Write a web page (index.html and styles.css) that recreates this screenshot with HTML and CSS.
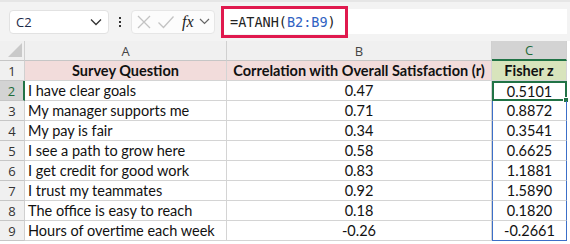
FILE: index.html
```html
<!DOCTYPE html>
<html lang="en">

<head>
  <meta charset="UTF-8">
  <meta name="viewport" content="width=device-width, initial-scale=1.0">
  <title>Fisher z</title>
  <link rel="stylesheet" href="styles.css">
</head>

<body>
  <div class="toolbar">
    <div class="name-box">
      <span>C2</span>
      <svg width="12" height="8" viewBox="0 0 12 8"><path d="M1 1.5 6 6.5 11 1.5" fill="none" stroke="#333" stroke-width="1.3"/></svg>
    </div>
    <div class="dots"><i></i><i></i><i></i></div>
    <div class="fx-box">
      <svg width="16" height="16" viewBox="0 0 16 16"><path d="M2 2 14 14M14 2 2 14" stroke="#c3c3c3" stroke-width="1.3"/></svg>
      <svg width="18" height="16" viewBox="0 0 18 16"><path d="M1.5 8.5 6.5 13.5 16.5 2.5" fill="none" stroke="#c3c3c3" stroke-width="1.3"/></svg>
      <span class="fx">fx</span>
      <svg width="11" height="7" viewBox="0 0 11 7"><path d="M1 1 5.5 5.5 10 1" fill="none" stroke="#666" stroke-width="1.2"/></svg>
    </div>
    <div class="formula">
      <span class="formula-text">=ATANH(<span class="ref">B2:B9</span>)</span>
    </div>
  </div>

  <div class="sheet">
    <div class="corner"><span class="tri"></span></div>
    <div class="col-head">A</div>
    <div class="col-head">B</div>
    <div class="col-head active">C</div>

    <div class="row-head">1</div>
    <div class="cell title">Survey Question</div>
    <div class="cell title">Correlation with Overall Satisfaction (r)</div>
    <div class="cell title green">Fisher z</div>

    <div class="row-head active">2</div>
    <div class="cell">I have clear goals</div>
    <div class="cell num">0.47</div>
    <div class="cell num selected">0.5101<span class="handle"></span></div>

    <div class="row-head">3</div>
    <div class="cell">My manager supports me</div>
    <div class="cell num">0.71</div>
    <div class="cell num spill">0.8872</div>

    <div class="row-head">4</div>
    <div class="cell">My pay is fair</div>
    <div class="cell num">0.34</div>
    <div class="cell num spill">0.3541</div>

    <div class="row-head">5</div>
    <div class="cell">I see a path to grow here</div>
    <div class="cell num">0.58</div>
    <div class="cell num spill">0.6625</div>

    <div class="row-head">6</div>
    <div class="cell">I get credit for good work</div>
    <div class="cell num">0.83</div>
    <div class="cell num spill">1.1881</div>

    <div class="row-head">7</div>
    <div class="cell">I trust my teammates</div>
    <div class="cell num">0.92</div>
    <div class="cell num spill">1.5890</div>

    <div class="row-head">8</div>
    <div class="cell">The office is easy to reach</div>
    <div class="cell num">0.18</div>
    <div class="cell num spill">0.1820</div>

    <div class="row-head">9</div>
    <div class="cell">Hours of overtime each week</div>
    <div class="cell num">-0.26</div>
    <div class="cell num spill last">-0.2661</div>
  </div>
</body>

</html>
```

FILE: styles.css
```css
* {
  margin: 0;
  padding: 0;
  box-sizing: border-box;
}

body {
  width: 570px;
  height: 244px;
  overflow: hidden;
  background: #fff;
  font-family: Lato, "Open Sans", sans-serif;
  color: #111;
}

.toolbar {
  display: flex;
  align-items: center;
  height: 41px;
  padding: 0 3px 0 9px;
  background: #f3f3f3;
  border-top: 2px solid #e6e6e6;
}

.name-box {
  display: flex;
  align-items: center;
  justify-content: space-between;
  width: 100px;
  height: 24px;
  padding: 0 6px 0 6px;
  background: #fff;
  border: 1px solid #e2e2e2;
  border-radius: 4px;
  font-family: "Open Sans", sans-serif;
  font-size: 13px;
  color: #1d2a4a;
}

.dots {
  display: flex;
  flex-direction: column;
  gap: 2px;
  width: 22px;
  align-items: center;
}

.dots i {
  width: 2px;
  height: 2px;
  background: #333;
}

.fx-box {
  display: flex;
  align-items: center;
  gap: 5px;
  width: 84px;
  height: 24px;
  padding: 0 4px 0 4px;
  background: #fcfcfc;
  border: 1px solid #e6e6e6;
  border-radius: 4px;
}

.fx {
  font-family: "Liberation Serif", serif;
  font-style: italic;
  font-size: 16px;
  color: #222;
  margin-left: 2px;
}

.formula {
  flex: 1;
  height: 25px;
  margin-left: 6px;
  background: #fff;
  display: flex;
  align-items: center;
}

.formula-text {
  display: flex;
  align-items: center;
  height: 32px;
  padding: 0 9px 0 6px;
  border: 3px solid #e0194e;
  font-family: "DejaVu Sans Mono", monospace;
  font-size: 13.5px;
  color: #222;
}

.ref {
  color: #2f62c2;
}

.sheet {
  display: grid;
  grid-template-columns: 25px 202px 265px 75px;
  grid-auto-rows: 20px;
  font-size: 14.5px;
}

.corner,
.col-head,
.row-head {
  background: #f0f0f0;
  color: #444;
  border-right: 1px solid #d0d0d0;
  border-bottom: 1px solid #c6c6c6;
  display: flex;
  align-items: center;
  justify-content: center;
}

.corner {
  justify-content: flex-end;
  align-items: flex-end;
  padding: 0 2px 3px 0;
}

.tri {
  width: 0;
  height: 0;
  border-left: 14px solid transparent;
  border-bottom: 14px solid #c9c9c9;
}

.col-head {
  font-family: "Open Sans", sans-serif;
  font-size: 13px;
}

.col-head.active {
  background: #d3d3d3;
  color: #1f6b3a;
  border-bottom: 2px solid #217346;
}

.row-head {
  font-family: "Open Sans", sans-serif;
  font-size: 13px;
  color: #333;
}

.row-head.active {
  background: #d3d3d3;
  color: #1f6b3a;
  border-right: 2px solid #217346;
}

.cell {
  position: relative;
  display: flex;
  align-items: center;
  padding: 0 3px;
  white-space: nowrap;
  border-right: 1px solid #d4d4d4;
  border-bottom: 1px solid #d4d4d4;
}

.cell.title {
  justify-content: center;
  font-weight: bold;
  background: #f2dcdb;
}

.cell.title.green {
  background: #d8e4bc;
}

.cell.num {
  justify-content: center;
}

.cell.selected {
  border: 2px solid #217346;
}

.handle {
  position: absolute;
  right: -4px;
  bottom: -4px;
  width: 6px;
  height: 6px;
  background: #217346;
  border: 1px solid #fff;
}

.cell.spill {
  border-left: 1px solid #3c6fc8;
  border-right: 1px solid #3c6fc8;
}

.cell.spill.last {
  border-bottom: 1px solid #3c6fc8;
}
```
